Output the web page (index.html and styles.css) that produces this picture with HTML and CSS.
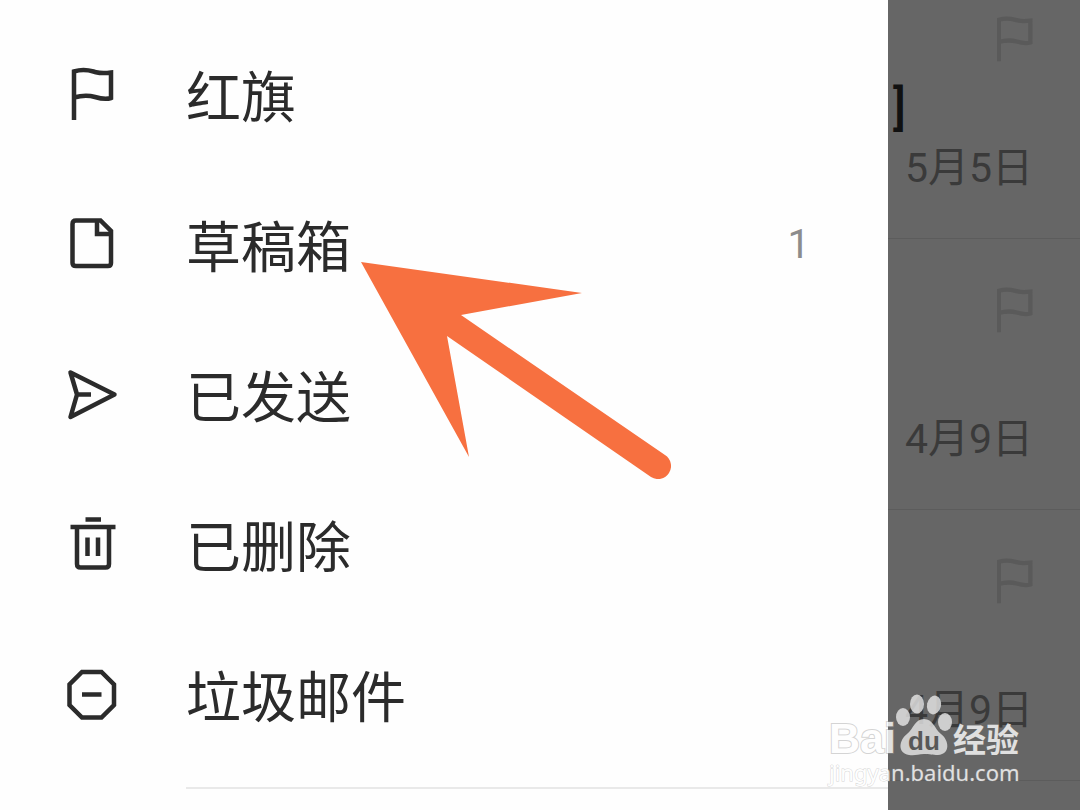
FILE: index.html
```html
<!DOCTYPE html>
<html lang="zh-CN">
<head>
  <meta charset="UTF-8" />
  <meta name="viewport" content="width=device-width, initial-scale=1.0" />
  <title>邮箱</title>
  <link rel="stylesheet" href="styles.css">
</head>
<body>
  <div class="screen">
    <nav class="drawer">
      <a class="folder" href="#flagged">
        <svg class="folder-icon" viewBox="0 0 54 54"><path d="M9 53V4.500C20 1 26 4 31 5.200C37 6.700 41 6.200 46 5.500V31C40 33 35 31.500 30 30C23 28 18 28 9 30.500" /></svg>
        <span class="folder-name">红旗</span>
      </a>
      <a class="folder" href="#drafts">
        <svg class="folder-icon" viewBox="0 0 54 54"><path d="M11 3.500H35.500L46 14V46Q46 49 43 49H11Q7.500 49 7.500 46V7Q7.500 3.500 11 3.500ZM32 3.500V17H46" /></svg>
        <span class="folder-name">草稿箱</span>
        <span class="folder-count">1</span>
      </a>
      <a class="folder" href="#sent">
        <svg class="folder-icon" viewBox="0 0 54 54"><path stroke-linejoin="round" d="M5.500 5.500L49.500 27.500L5.500 50L12 27.500ZM12 27.500H26" /></svg>
        <span class="folder-name">已发送</span>
      </a>
      <a class="folder" href="#deleted">
        <svg class="folder-icon" viewBox="0 0 54 54"><path d="M20.500 2.500H36M5.500 10H50.500M12 10V47Q12 50.500 15.500 50.500H40.500Q44 50.500 44 47V10M22.500 20.500V39M33 20.500V39" /></svg>
        <span class="folder-name">已删除</span>
      </a>
      <a class="folder" href="#junk">
        <svg class="folder-icon" viewBox="0 0 54 54"><path d="M17 5H36.500L49 17.500V38L36.500 50.500H17L4.500 38V17.500ZM17 27.500H36.500" /></svg>
        <span class="folder-name">垃圾邮件</span>
      </a>
      <hr class="divider">
    </nav>

    <main class="mail-list">
      <article class="mail">
        <svg class="mail-flag" viewBox="7 0 42 54"><path d="M9 53V4.500C20 1 26 4 31 5.200C37 6.700 41 6.200 46 5.500V31C40 33 35 31.500 30 30C23 28 18 28 9 30.500" /></svg>
        <div class="mail-title">]</div>
        <time class="mail-date">5月5日</time>
      </article>
      <article class="mail">
        <svg class="mail-flag" viewBox="7 0 42 54"><path d="M9 53V4.500C20 1 26 4 31 5.200C37 6.700 41 6.200 46 5.500V31C40 33 35 31.500 30 30C23 28 18 28 9 30.500" /></svg>
        <div class="mail-title"></div>
        <time class="mail-date">4月9日</time>
      </article>
      <article class="mail">
        <svg class="mail-flag" viewBox="7 0 42 54"><path d="M9 53V4.500C20 1 26 4 31 5.200C37 6.700 41 6.200 46 5.500V31C40 33 35 31.500 30 30C23 28 18 28 9 30.500" /></svg>
        <div class="mail-title"></div>
        <time class="mail-date">4月9日</time>
      </article>
    </main>

    <!-- pointer to the drafts folder -->
    <svg class="arrow" viewBox="0 0 310 217">
      <path d="M0 0L221 31L100 53L304 193A13 13 0 0 1 290 215L86 74L108 195Z" />
    </svg>

    <div class="watermark">
      <div class="watermark-logo">
        <span class="logo-bai">Bai</span>
        <span class="logo-paw">
          <svg viewBox="0 0 58 62">
            <ellipse cx="8" cy="23" rx="7" ry="9" />
            <ellipse cx="22" cy="10" rx="7" ry="9.500" />
            <ellipse cx="39" cy="11" rx="7" ry="9.500" transform="rotate(12 39 11)" />
            <ellipse cx="50" cy="28" rx="7" ry="9" />
            <path d="M29 25C38 25 39 34 46 40C54 46 56 60 43 61C37 61 35 60 29 60C23 60 20 62 14 61C2 59 4 46 12 40C19 34 20 25 29 25Z" />
          </svg>
          <span class="logo-du">du</span>
        </span>
        <span class="logo-name">经验</span>
      </div>
      <div class="watermark-url">jingyan.baidu.com</div>
    </div>
  </div>
</body>
</html>
```
FILE: styles.css
```css
body {
  margin: 0;
  font-family: Roboto, "Noto Sans CJK SC", sans-serif;
  background: #666;
  color: #2b2b2b;
}
.screen {
  position: relative;
  display: flex;
  height: 100vh;
  overflow: hidden;
}

/* folder drawer */
.drawer {
  flex: 1;
  padding-top: 19px;
  background: #fefefe;
}
.folder {
  display: flex;
  align-items: center;
  height: 150px;
  padding: 0 78px 0 65px;
  color: inherit;
  text-decoration: none;
}
.folder-icon {
  width: 54px;
  height: 54px;
  margin-right: 67px;
  fill: none;
  stroke: #2b2b2b;
  stroke-width: 4.5;
}
.folder-name {
  flex: 1;
  padding-bottom: 2px;
  font-family: "Noto Sans CJK SC", sans-serif;
  font-size: 55px;
  line-height: 80px;
}
.folder-count {
  font-size: 40px;
  color: #8c8c8c;
}
.divider {
  margin: 18px 0 0 186px;
  border: 0;
  border-top: 2px solid #e9e9e9;
}

/* dimmed mail list behind the drawer */
.mail-list {
  width: 192px;
  margin-top: -32px;
}
.mail {
  display: flex;
  flex-direction: column;
  box-sizing: border-box;
  height: 271px;
  padding: 48px 47px 0 0;
  border-bottom: 1px solid #5c5c5c;
}
.mail-flag {
  align-self: flex-end;
  width: 36px;
  height: 46px;
  fill: none;
  stroke: #5a5a5a;
  stroke-width: 5;
}
.mail-title {
  height: 56px;
  margin-top: 18px;
  padding-left: 5px;
  font-size: 48px;
  font-weight: 500;
  line-height: 56px;
  color: #111;
}
.mail-date {
  align-self: flex-end;
  margin-top: 4px;
  font-size: 41px;
  line-height: 56px;
  white-space: nowrap;
  color: #3a3a3a;
}

.arrow {
  position: absolute;
  top: 262px;
  left: 361px;
  width: 310px;
  height: 217px;
  fill: #f77040;
}

/* watermark */
.watermark {
  position: absolute;
  right: 57px;
  bottom: 22px;
  width: 194px;
  color: #fff;
  opacity: 0.8;
}
.watermark-logo {
  display: flex;
  align-items: flex-end;
}
.logo-bai,
.watermark-url {
  -webkit-text-stroke: 2px rgba(150, 150, 150, 0.5);
  paint-order: stroke fill;
}
.logo-bai {
  width: 66px;
  font: bold 43px/36px "Liberation Sans", sans-serif;
}
.logo-paw {
  position: relative;
  width: 58px;
  height: 62px;
}
.logo-paw svg {
  display: block;
  fill: #e8e8e8;
}
.logo-du {
  position: absolute;
  left: 0;
  bottom: 0;
  width: 100%;
  font: bold 26px/30px "Liberation Sans", sans-serif;
  text-align: center;
  color: #555;
}
.logo-name {
  font-size: 33px;
  font-weight: bold;
  line-height: 30px;
}
.watermark-url {
  font: 22px/32px "Noto Sans", sans-serif;
  -webkit-text-stroke-width: 1px;
}
```
